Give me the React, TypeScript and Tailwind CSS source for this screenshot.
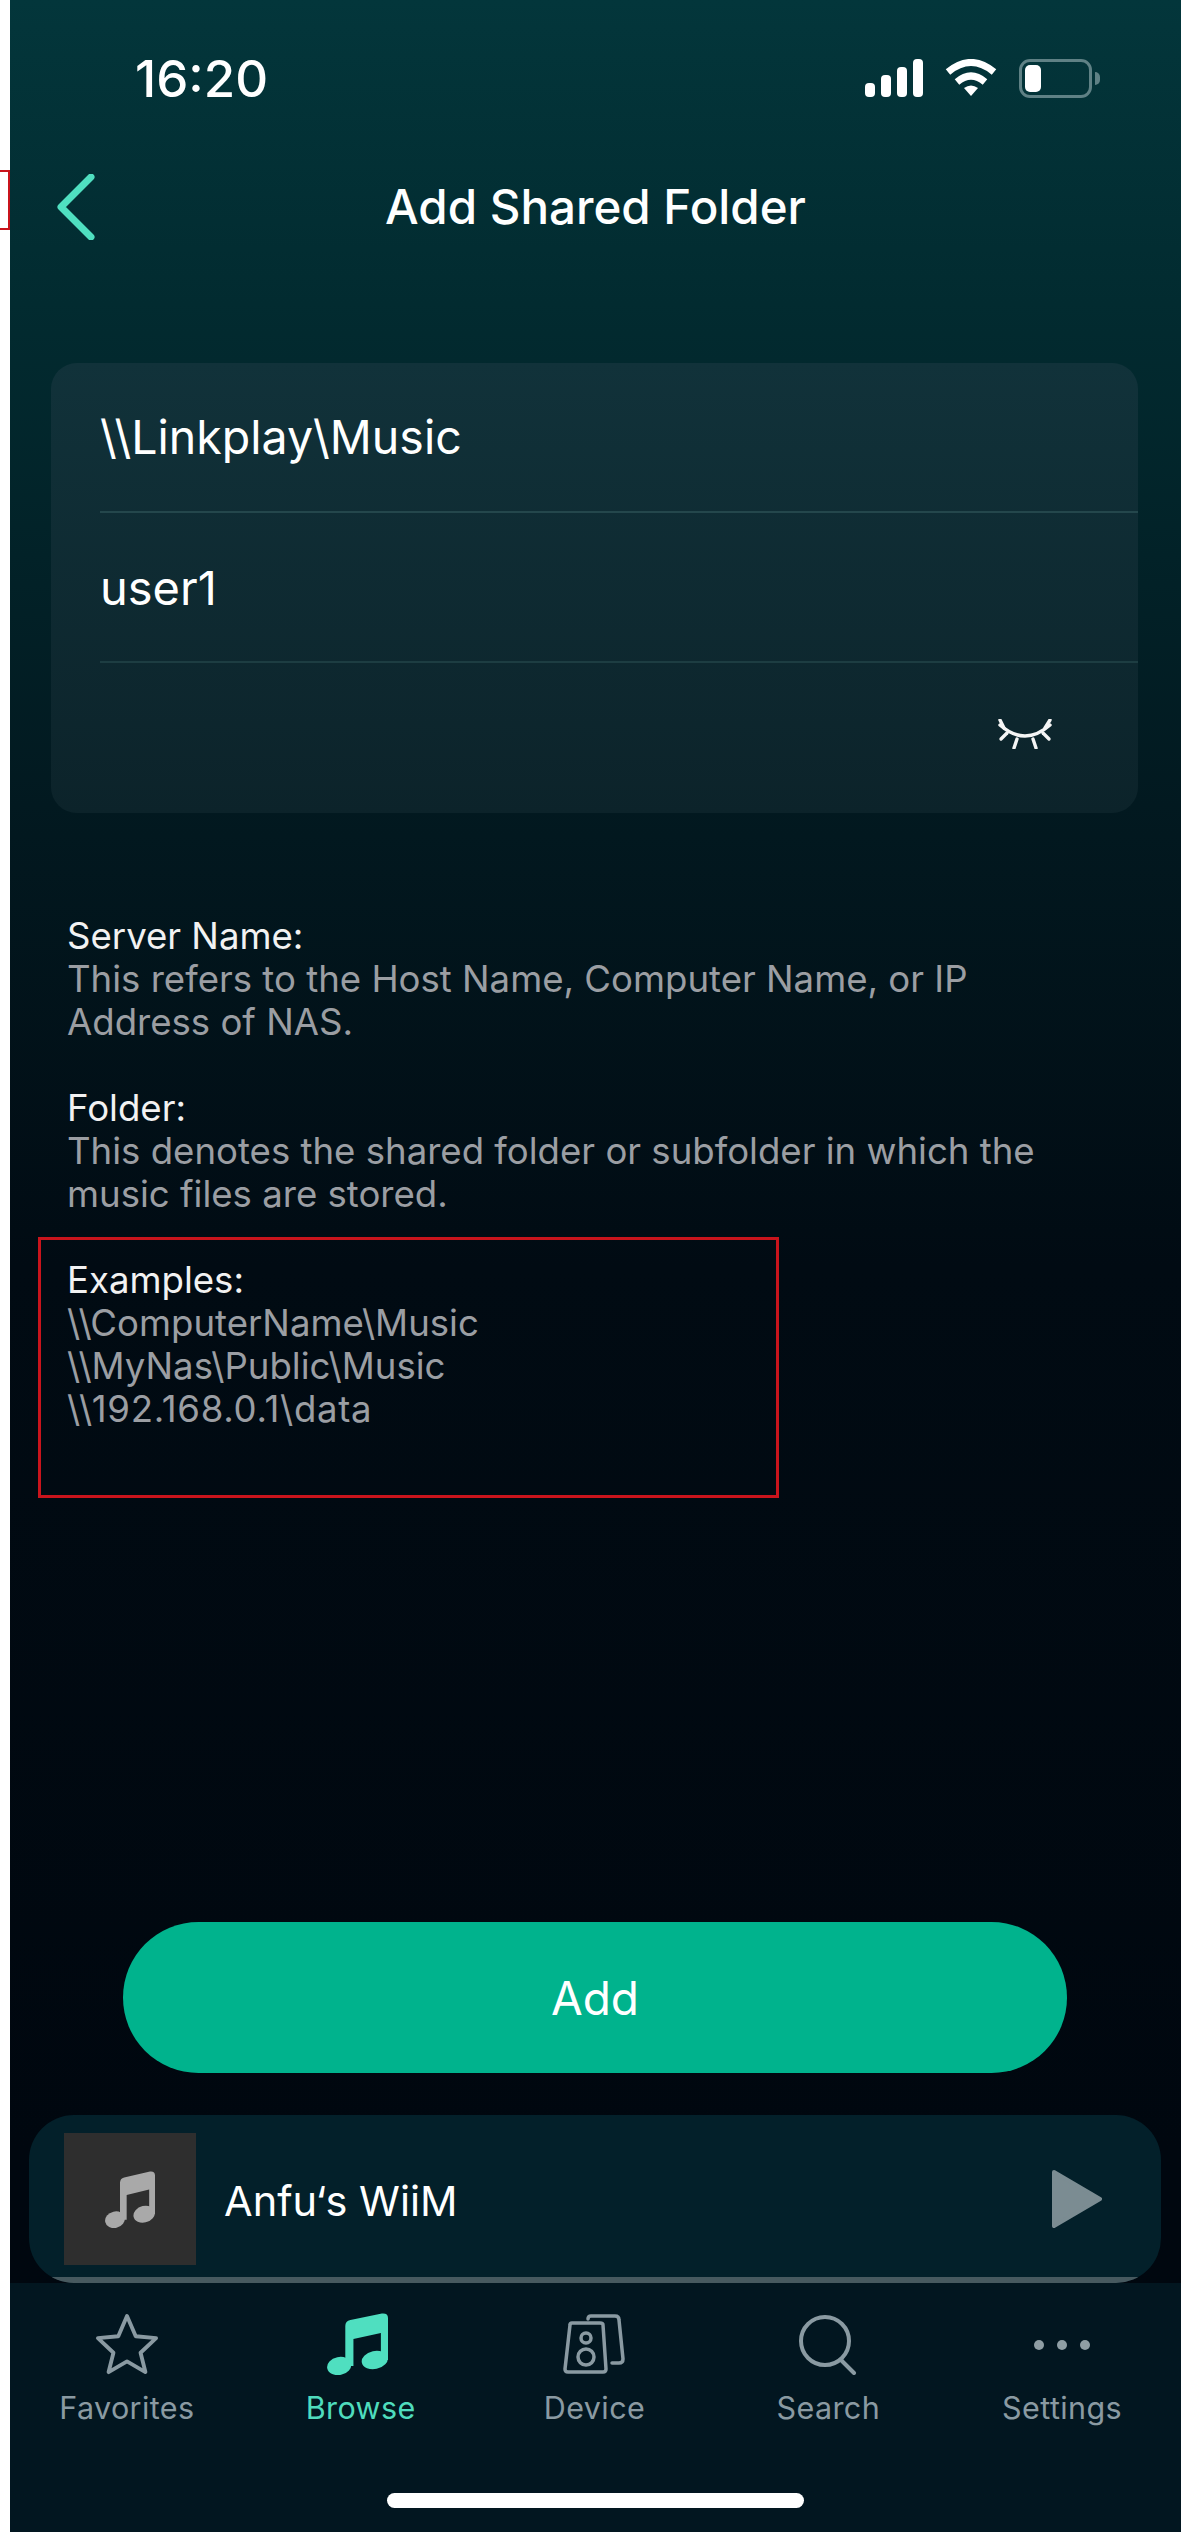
import React from "react";

const font = { fontFamily: "Inter, 'Noto Sans', sans-serif" };

function Note({ className, fill }: { className: string; fill: string }) {
  return (
    <svg viewBox="0 0 60 62" preserveAspectRatio="none" className={className} fill={fill}>
      <path d="M18 13 Q18 8 23 7 L54 .6 Q60 0 60 5 V47 H53 V20 L26 26 V53 H18 Z" />
      <ellipse cx="12" cy="53" rx="12" ry="9" transform="rotate(-12 12 53)" />
      <ellipse cx="47" cy="47" rx="13" ry="9" transform="rotate(-12 47 47)" />
    </svg>
  );
}

const tabs: { label: string; active?: boolean; icon: React.ReactNode }[] = [
  {
    label: "Favorites",
    icon: (
      <svg viewBox="0 0 66 64" className="w-[66px] h-[62px]" fill="none" stroke="#8a9aa2" strokeWidth="4" strokeLinejoin="round">
        <path d="M33 3 L42 24 L63 26 L47 41 L52 61 L33 50 L14 61 L19 41 L3 26 L24 24 Z" />
      </svg>
    ),
  },
  { label: "Browse", active: true, icon: <Note className="mr-[6px] w-[61px] h-[62px]" fill="#4fdfc0" /> },
  {
    label: "Device",
    icon: (
      <svg viewBox="0 0 62 62" className="w-[62px] h-[62px]" fill="none" stroke="#8a9aa2" strokeWidth="3.5" strokeLinejoin="round" strokeLinecap="round">
        <path d="M25 6 Q25 3 28 3 H52 Q56 3 56 7 L60 46 Q60 50 56 50 H49" />
        <path d="M7 12 Q7 10 9 10 H37 Q40 10 40 12 L43 56 Q43 59 40 59 H5 Q2 59 2 56 Z" />
        <circle cx="23" cy="25" r="5" />
        <circle cx="23" cy="44" r="8" />
      </svg>
    ),
  },
  {
    label: "Search",
    icon: (
      <svg viewBox="0 0 62 62" className="w-[62px] h-[62px]" fill="none" stroke="#8a9aa2" strokeWidth="4" strokeLinecap="round">
        <circle cx="28" cy="28" r="24" />
        <path d="M44 47 L57 60" />
      </svg>
    ),
  },
  {
    label: "Settings",
    icon: (
      <svg viewBox="0 0 62 62" className="w-[62px] h-[62px]" fill="#8f9ea4">
        <circle cx="8" cy="32" r="5" />
        <circle cx="31" cy="32" r="5" />
        <circle cx="54" cy="32" r="5" />
      </svg>
    ),
  },
];

export default function App() {
  return (
    <div className="relative flex w-[1181px] h-[2532px] bg-white overflow-hidden" style={font}>
      <div className="absolute left-[-3px] top-[170px] w-[13px] h-[60px] border-2 border-[#c9141c]" />
      <div className="w-[10px] shrink-0" />
      <div className="flex-1 flex flex-col bg-[linear-gradient(180deg,#03363b_0%,#022b30_12%,#02181f_33%,#010b13_50%,#00070f_85%)]">
        <div className="h-[156px] flex items-center justify-between pl-[125px] pr-[81px]">
          <span className="text-[51px] font-medium leading-none text-white">16:20</span>
          <div className="flex items-center">
            <svg viewBox="0 0 58 38" className="w-[58px] h-[38px]" fill="#fff">
              <rect x="0" y="24" width="10" height="14" rx="4" />
              <rect x="16" y="16" width="10" height="22" rx="4" />
              <rect x="32" y="8" width="10" height="30" rx="4" />
              <rect x="48" y="0" width="10" height="38" rx="4" />
            </svg>
            <svg viewBox="0 0 52 38" className="ml-[22px] w-[52px] h-[38px]" fill="none" stroke="#fff" strokeWidth="7">
              <path d="M3 13 Q26 -6 49 13" />
              <path d="M12 23 Q26 11 40 23" />
              <path d="M19 29 L26 37 L33 29 Q26 24 19 29 Z" fill="#fff" stroke="none" />
            </svg>
            <div className="ml-[22px] w-[73px] h-[39px] rounded-[11px] border-[3px] border-[#5f8185] p-[3px]">
              <div className="w-[16px] h-full rounded-[5px] bg-white" />
            </div>
            <div className="ml-[3px] w-[5px] h-[13px] rounded-r-full bg-[#5f8185]" />
          </div>
        </div>

        <div className="h-[102px] grid grid-cols-[1fr_auto_1fr] items-center">
          <svg viewBox="0 0 38 66" className="ml-[47px] w-[38px] h-[66px]" fill="none" stroke="#4fdfc0" strokeWidth="7" strokeLinecap="round" strokeLinejoin="round">
            <path d="M34 3 L4 33 L34 63" />
          </svg>
          <span className="text-[47.5px] font-medium leading-none text-white">Add Shared Folder</span>
          <span />
        </div>

        <div className="mt-[105px] ml-[41px] mr-[43px] h-[450px] rounded-[26px] bg-gradient-to-b from-[#11323a] to-[#0c232a] flex flex-col pl-[49px]">
          <div className="h-[148px] flex items-center text-[46.5px] text-white leading-none">{"\\\\Linkplay\\Music"}</div>
          <div className="h-[2px] bg-[#24474c]" />
          <div className="h-[148px] flex items-center text-[47px] text-white leading-none">user1</div>
          <div className="h-[2px] bg-[#1d3d42]" />
          <div className="flex-1 flex items-center justify-end pr-[86px] pb-[8px]">
            <svg viewBox="0 0 54 30" className="w-[54px] h-[30px]" fill="none" stroke="#f5f5f5" strokeWidth="3.4" strokeLinecap="round">
              <path d="M2 6 Q27 28 52 6" />
              <path d="M2 1 L6 9" />
              <path d="M52 1 L47 9" />
              <path d="M9 14 L3 20" />
              <path d="M45 14 L51 20" />
              <path d="M19 20 L16 29" />
              <path d="M35 20 L38 29" />
            </svg>
          </div>
        </div>

        <div className="relative mt-[102px] pl-[57px] text-[36.6px] leading-[43px] text-[#9b9ea3]">
          <div className="text-[#f2f2f2]">Server Name:</div>
          <div>This refers to the Host Name, Computer Name, or IP</div>
          <div>Address of NAS.</div>
          <div className="h-[43px]" />
          <div className="text-[#f2f2f2]">Folder:</div>
          <div>This denotes the shared folder or subfolder in which the</div>
          <div>music files are stored.</div>
          <div className="h-[43px]" />
          <div className="text-[#f2f2f2]">Examples:</div>
          <div>{"\\\\ComputerName\\Music"}</div>
          <div>{"\\\\MyNas\\Public\\Music"}</div>
          <div className="tracking-[0.7px]">{"\\\\192.168.0.1\\data"}</div>
          <div className="absolute left-[28px] top-[322px] w-[741px] h-[261px] border-[3px] border-[#c9141c]" />
        </div>

        <div className="flex-1" />

        <div className="ml-[113px] mr-[114px] h-[151px] rounded-full bg-[#00b38d] flex items-center justify-center text-[46px] text-white leading-none">
          Add
        </div>

        <div className="relative mt-[42px] ml-[19px] mr-[20px] h-[168px] rounded-[45px] bg-[#03202a] overflow-hidden flex items-center pl-[35px] pr-[59px]">
          <div className="w-[132px] h-[132px] bg-[#2e2e2e] flex items-center justify-center">
            <Note className="w-[50px] h-[57px]" fill="#a9a9a9" />
          </div>
          <span className="ml-[28px] pt-[5px] flex-1 text-[41.5px] leading-none text-white">Anfu‘s WiiM</span>
          <svg viewBox="0 0 50 58" className="w-[50px] h-[58px]" fill="#7b8c92" stroke="#7b8c92" strokeWidth="4" strokeLinejoin="round">
            <path d="M2 2 L48 29 L2 56 Z" />
          </svg>
          <div className="absolute left-0 right-0 bottom-0 h-[6px] bg-[#47595f]" />
        </div>

        <div className="min-h-[249px] bg-[#021620] flex flex-col pt-[30px]">
          <div className="grid grid-cols-5 pr-[2px]">
            {tabs.map((t) => (
              <div key={t.label} className="flex flex-col items-center">
                <div className="h-[62px] flex items-center justify-center">{t.icon}</div>
                <span className={`mt-[13px] text-[30.5px] leading-[40px] tracking-[0.4px] ${t.active ? "text-[#4fdcbd]" : "text-[#8a9aa2]"}`}>
                  {t.label}
                </span>
              </div>
            ))}
          </div>
          <div className="mt-[65px] mx-auto w-[417px] h-[15px] rounded-full bg-white" />
        </div>
      </div>
    </div>
  );
}
